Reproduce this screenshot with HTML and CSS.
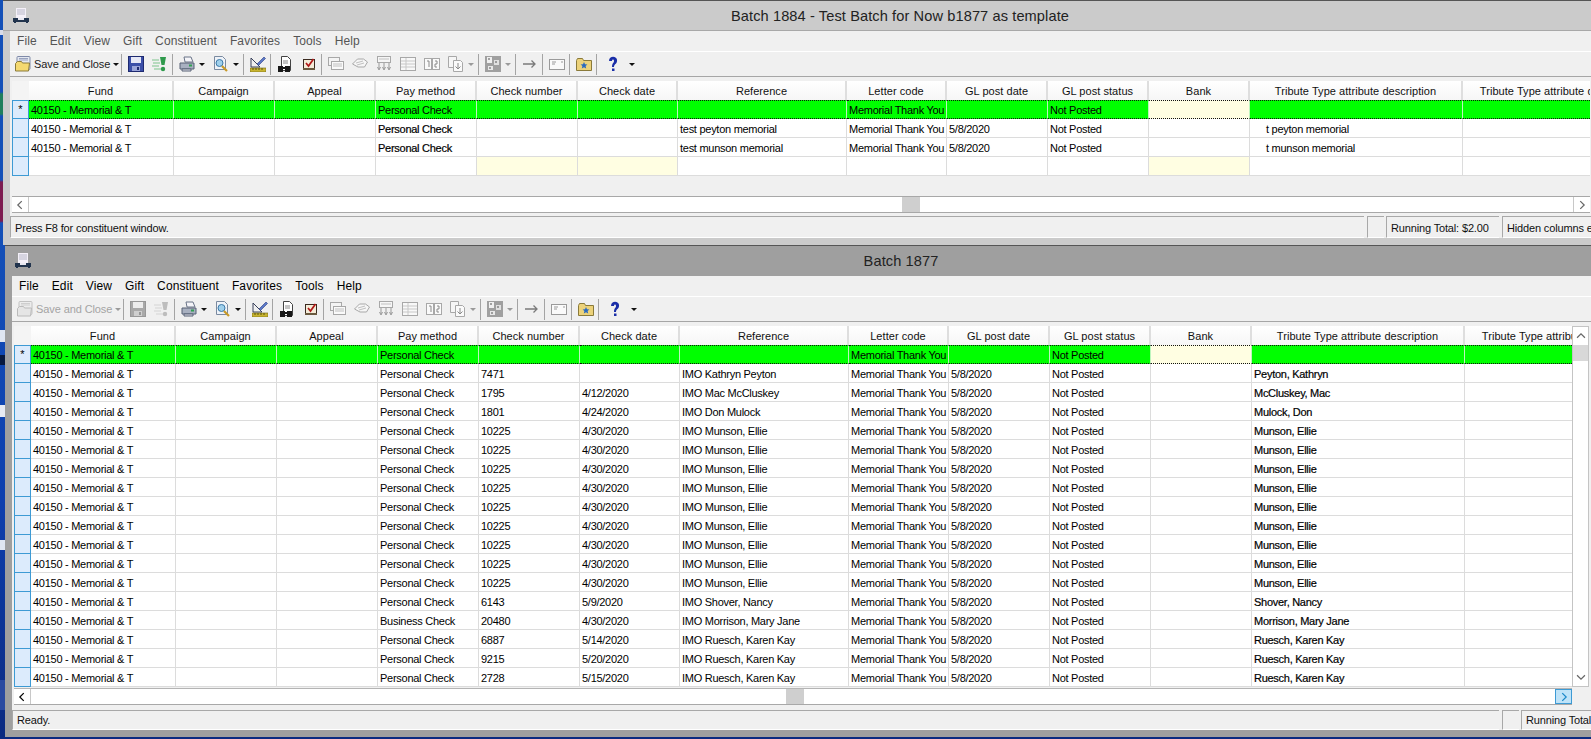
FILE: index.html
```html
<!DOCTYPE html>
<html lang="en">
<head>
<meta charset="utf-8">
<title>Batch 1884</title>
<link rel="stylesheet" href="styles.css">
</head>
<body>
<svg class="defs" width="0" height="0" aria-hidden="true">
  <symbol id="i-inbox" viewBox="0 0 16 16"><rect x="3" y="0" width="10" height="10" fill="#f4f0f8"/><path d="M4 2h8M4 4h8M4 6h8" stroke="#b8b8c8"/><rect x="0" y="10" width="16" height="4" fill="#22344e"/><rect x="5" y="10" width="6" height="2" fill="#e8e8f0"/><rect x="1" y="14" width="2" height="1" fill="#22344e"/><rect x="13" y="14" width="2" height="1" fill="#22344e"/></symbol>
  <symbol id="i-saveclose" viewBox="0 0 16 16"><rect x="2" y="0.500" width="13" height="13" rx="1" fill="#e4e8f0" stroke="#7f8aa8"/><path d="M4 4h9M4 2.500h9" stroke="#9aa4c0"/><path d="M0.500 7.500l2-2h4l1 1.500h7l-1 8h-13z" fill="#f4d970" stroke="#8a7a3a"/></symbol>
  <symbol id="i-floppy" viewBox="0 0 16 16"><rect x="0.500" y="0.500" width="15" height="15" fill="#3b4fa8" stroke="#1e2a70"/><rect x="3" y="1" width="10" height="6" fill="#e6e8f6"/><rect x="4" y="10" width="8" height="5" fill="#9aa4d8"/><rect x="9" y="11" width="2" height="3" fill="#1e2a70"/></symbol>
  <symbol id="i-flag" viewBox="0 0 16 16"><path d="M0 4h7M1 7h7M0 10h7M2 13h7" stroke="#7cc48c"/><path d="M8 1h6l-1.500 8h-3z" fill="#2f9a4c"/><circle cx="11" cy="13" r="2.200" fill="#2f9a4c"/></symbol>
  <symbol id="i-print" viewBox="0 0 16 16"><path d="M5 1h7l2 5H6z" fill="#f4f4f8" stroke="#6a7488"/><path d="M1 7h14v6H1z" fill="#a8b0c0" stroke="#566074"/><path d="M3 13h9v2H3z" fill="#e4e4ec" stroke="#566074"/><rect x="10" y="8.500" width="3" height="2" fill="#2fa050"/></symbol>
  <symbol id="i-preview" viewBox="0 0 16 16"><path d="M1.500 0.500h8l3 3v10h-11z" fill="#eef2f8" stroke="#7a8aa0"/><circle cx="6.500" cy="7" r="3.500" fill="#9fd0ec" stroke="#3a78a8"/><path d="M9 10l5 5" stroke="#c89a28" stroke-width="2.200"/></symbol>
  <symbol id="i-ruler" viewBox="0 0 16 16"><path d="M1 2v9h9z" fill="none" stroke="#38405a"/><path d="M7 8l7-7 1.500 1.500-7 7z" fill="#5a78c8" stroke="#2a3a80" stroke-width=".6"/><rect x="0" y="12" width="16" height="4" fill="#c8b430" stroke="#6e6418" stroke-width=".6"/><path d="M3 12v2M6 12v2M9 12v2M12 12v2" stroke="#5a5410"/></symbol>
  <symbol id="i-binoc" viewBox="0 0 16 16"><path d="M4.500 0.500h6l3 3v11h-9z" fill="#fff" stroke="#444"/><path d="M6 5h5M6 7h5" stroke="#888"/><path d="M1 10h5v6H1zM8 10h5v6H8z" fill="#181818"/><rect x="5" y="11" width="4" height="2" fill="#181818"/></symbol>
  <symbol id="i-check" viewBox="0 0 16 16"><rect x="2.500" y="3.500" width="11" height="9" fill="#f4ecd8" stroke="#3a2a20"/><rect x="2" y="12" width="12" height="2" fill="#6a5a40"/><path d="M5 7l2.500 3L12.500 3" fill="none" stroke="#b01818" stroke-width="1.700"/></symbol>
  <symbol id="i-card" viewBox="0 0 16 16"><rect x="0.500" y="1.500" width="11" height="8" fill="#f4f4f4" stroke="#a8a8a8"/><rect x="3.500" y="5.500" width="12" height="8" fill="#fafafa" stroke="#a8a8a8"/><path d="M5 8h9M5 10h9" stroke="#c0c0c0"/></symbol>
  <symbol id="i-tag" viewBox="0 0 16 16"><path d="M0.500 8l5-5h6l4 3-3 5H6z" fill="#f6f6f6" stroke="#a8a8a8"/><path d="M4 7l7-2M5 9l7-2" stroke="#c0c0c0"/></symbol>
  <symbol id="i-fork" viewBox="0 0 16 16"><rect x="1.500" y="0.500" width="13" height="6" fill="#f6f6f6" stroke="#a8a8a8"/><path d="M3 3h10" stroke="#c0c0c0"/><path d="M3 7v6M8 7v6M13 7v6M1.500 11l1.500 3 1.500-3M6.500 11l1.500 3 1.500-3M11.500 11l1.500 3 1.500-3" fill="none" stroke="#9a9a9a"/></symbol>
  <symbol id="i-table" viewBox="0 0 16 16"><rect x="0.500" y="1.500" width="15" height="13" fill="#f8f8f8" stroke="#a8a8a8"/><path d="M1 5h14M1 8h14M1 11h14M6 2v12" stroke="#c8c8c8"/></symbol>
  <symbol id="i-split" viewBox="0 0 16 16"><rect x="0.500" y="2.500" width="7" height="11" fill="#fafafa" stroke="#a8a8a8"/><rect x="8.500" y="2.500" width="7" height="11" fill="#fafafa" stroke="#a8a8a8"/><path d="M3 5h2v6M11 5h2v3h-2v3h2" fill="none" stroke="#8a8a8a"/></symbol>
  <symbol id="i-copy" viewBox="0 0 16 16"><path d="M0.500 0.500h8v11h-8z" fill="#f6f6f6" stroke="#a8a8a8"/><path d="M5.500 4.500h7l2 2v9h-9z" fill="#fafafa" stroke="#a8a8a8"/><path d="M10 7v6M7.500 10.500l2.500 2.500 2.500-2.500" fill="none" stroke="#8a8a8a"/></symbol>
  <symbol id="i-dice" viewBox="0 0 16 16"><rect x="0" y="0" width="16" height="16" fill="#a0a0a0"/><rect x="2" y="1" width="5" height="6" fill="#f0f0f0"/><rect x="9" y="4" width="5" height="5" fill="#e0e0e0"/><rect x="3" y="10" width="5" height="4" fill="#e8e8e8"/><path d="M3 3h2M10 6h2M4 12h2" stroke="#555"/></symbol>
  <symbol id="i-arrow" viewBox="0 0 16 16"><path d="M1 8h12M9.500 4.500L13 8l-3.500 3.500" fill="none" stroke="#7a7a7a" stroke-width="1.300"/></symbol>
  <symbol id="i-mail" viewBox="0 0 16 16"><rect x="0.500" y="3.500" width="15" height="10" fill="#fafafa" stroke="#9a9a9a"/><path d="M3 6h4M3 8h3M12 6h2" stroke="#9a9a9a"/></symbol>
  <symbol id="i-folder" viewBox="0 0 16 16"><path d="M0.500 4.500l1-2h5l1 2h8v10H0.500z" fill="#ecd27a" stroke="#8a7a3a"/><path d="M8 6l1 2.300 2.400.2-1.800 1.600.6 2.400L8 11.200l-2.200 1.300.6-2.400L4.600 8.500 7 8.300z" fill="#2a6ac0"/></symbol>
  <symbol id="i-help" viewBox="0 0 16 16"><path d="M4 5c0-6 9-5 8 0 0 3-3 3-3 6H7c0-4 2-4 2-6 0-2-2-2-2 0z" fill="#1a2ea8"/><rect x="7" y="12.500" width="2.500" height="2.500" fill="#1a2ea8"/></symbol>
  <symbol id="i-left" viewBox="0 0 16 16"><path d="M10 3.500L5.500 8l4.500 4.500" fill="none" stroke="currentColor" stroke-width="1.400"/></symbol>
  <symbol id="i-right" viewBox="0 0 16 16"><path d="M6 3.500L10.500 8 6 12.500" fill="none" stroke="currentColor" stroke-width="1.400"/></symbol>
  <symbol id="i-up" viewBox="0 0 16 16"><path d="M3.500 10L8 5.500l4.500 4.500" fill="none" stroke="currentColor" stroke-width="1.400"/></symbol>
  <symbol id="i-down" viewBox="0 0 16 16"><path d="M3.500 6L8 10.500 12.500 6" fill="none" stroke="currentColor" stroke-width="1.400"/></symbol>
</svg>

<main class="desktop">
  <span class="bit bit-a"></span><span class="bit bit-b"></span><span class="bit bit-c"></span><span class="bit bit-d"></span><span class="bit bit-e"></span><span class="bit bit-f"></span>

  <section class="window win-a">
    <header class="titlebar">
      <svg class="title-icon"><use href="#i-inbox"/></svg>
      <h1 class="title">Batch 1884 - Test Batch for Now b1877 as template</h1>
    </header>
    <div class="content">
      <nav class="menu"><span>File</span><span>Edit</span><span>View</span><span>Gift</span><span>Constituent</span><span>Favorites</span><span>Tools</span><span>Help</span></nav>
      <div class="toolbar">
        <span class="tool wide"><svg class="ic"><use href="#i-saveclose"/></svg><span class="tool-label">Save and Close</span><i class="caret"></i></span>
        <span class="sep"></span>
        <span class="tool"><svg class="ic"><use href="#i-floppy"/></svg></span>
        <span class="tool"><svg class="ic"><use href="#i-flag"/></svg></span>
        <span class="sep"></span>
        <span class="tool"><svg class="ic"><use href="#i-print"/></svg><i class="caret"></i></span>
        <span class="tool"><svg class="ic"><use href="#i-preview"/></svg><i class="caret"></i></span>
        <span class="sep"></span>
        <span class="tool"><svg class="ic"><use href="#i-ruler"/></svg></span>
        <span class="sep"></span>
        <span class="tool"><svg class="ic"><use href="#i-binoc"/></svg></span>
        <span class="tool"><svg class="ic"><use href="#i-check"/></svg></span>
        <span class="sep"></span>
        <span class="tool"><svg class="ic"><use href="#i-card"/></svg></span>
        <span class="tool"><svg class="ic"><use href="#i-tag"/></svg></span>
        <span class="tool"><svg class="ic"><use href="#i-fork"/></svg></span>
        <span class="tool"><svg class="ic"><use href="#i-table"/></svg></span>
        <span class="tool"><svg class="ic"><use href="#i-split"/></svg></span>
        <span class="tool"><svg class="ic"><use href="#i-copy"/></svg><i class="caret off"></i></span>
        <span class="sep"></span>
        <span class="tool"><svg class="ic"><use href="#i-dice"/></svg><i class="caret off"></i></span>
        <span class="sep"></span>
        <span class="tool"><svg class="ic"><use href="#i-arrow"/></svg></span>
        <span class="sep"></span>
        <span class="tool"><svg class="ic"><use href="#i-mail"/></svg></span>
        <span class="sep"></span>
        <span class="tool"><svg class="ic"><use href="#i-folder"/></svg></span>
        <span class="sep"></span>
        <span class="tool help"><svg class="ic"><use href="#i-help"/></svg><i class="caret"></i></span>
      </div>
      <div class="grid-area">
        <div class="table-box">
          <table class="grid">
            <colgroup><col class="c-rh"><col class="c-fund"><col class="c-std"><col class="c-std"><col class="c-std"><col class="c-std"><col class="c-date"><col class="c-ref"><col class="c-letter"><col class="c-std"><col class="c-std"><col class="c-std"><col class="c-trib"><col class="c-last"></colgroup>
            <thead><tr><th class="corner"></th><th>Fund</th><th>Campaign</th><th>Appeal</th><th>Pay method</th><th>Check number</th><th>Check date</th><th>Reference</th><th>Letter code</th><th>GL post date</th><th>GL post status</th><th>Bank</th><th>Tribute Type attribute description</th><th>Tribute Type attribute description</th></tr></thead>
            <tbody>
              <tr class="active"><th class="rh">*</th><td>40150 - Memorial &amp; T</td><td></td><td></td><td>Personal Check</td><td></td><td></td><td></td><td>Memorial Thank You</td><td></td><td>Not Posted</td><td class="req"></td><td></td><td></td></tr>
              <tr><th class="rh"></th><td>40150 - Memorial &amp; T</td><td></td><td></td><td class="dark">Personal Check</td><td></td><td></td><td>test peyton memorial</td><td>Memorial Thank You</td><td>5/8/2020</td><td>Not Posted</td><td></td><td class="indent">t peyton memorial</td><td></td></tr>
              <tr><th class="rh"></th><td>40150 - Memorial &amp; T</td><td></td><td></td><td class="dark">Personal Check</td><td></td><td></td><td>test munson memorial</td><td>Memorial Thank You</td><td>5/8/2020</td><td>Not Posted</td><td></td><td class="indent">t munson memorial</td><td></td></tr>
              <tr><th class="rh"></th><td></td><td></td><td></td><td></td><td class="req"></td><td class="req"></td><td></td><td></td><td></td><td></td><td class="req"></td><td></td><td></td></tr>
            </tbody>
          </table>
        </div>
      </div>
      <div class="hscroll">
        <span class="sb-btn"><svg class="chev"><use href="#i-left"/></svg></span>
        <span class="sb-track"><span class="sb-thumb"></span></span>
        <span class="sb-btn end"><svg class="chev"><use href="#i-right"/></svg></span>
      </div>
      <footer class="status">
        <span class="panel main-panel">Press F8 for constituent window.</span>
        <span class="panel small-panel"></span>
        <span class="panel total-panel">Running Total: $2.00</span>
        <span class="panel hidden-panel">Hidden columns exist</span>
      </footer>
    </div>
  </section>

  <section class="window win-b">
    <header class="titlebar">
      <svg class="title-icon"><use href="#i-inbox"/></svg>
      <h1 class="title">Batch 1877</h1>
    </header>
    <div class="content">
      <nav class="menu"><span>File</span><span>Edit</span><span>View</span><span>Gift</span><span>Constituent</span><span>Favorites</span><span>Tools</span><span>Help</span></nav>
      <div class="toolbar">
        <span class="tool wide dim"><svg class="ic"><use href="#i-saveclose"/></svg><span class="tool-label">Save and Close</span><i class="caret off"></i></span>
        <span class="sep"></span>
        <span class="tool dim"><svg class="ic"><use href="#i-floppy"/></svg></span>
        <span class="tool dim"><svg class="ic"><use href="#i-flag"/></svg></span>
        <span class="sep"></span>
        <span class="tool"><svg class="ic"><use href="#i-print"/></svg><i class="caret"></i></span>
        <span class="tool"><svg class="ic"><use href="#i-preview"/></svg><i class="caret"></i></span>
        <span class="sep"></span>
        <span class="tool"><svg class="ic"><use href="#i-ruler"/></svg></span>
        <span class="sep"></span>
        <span class="tool"><svg class="ic"><use href="#i-binoc"/></svg></span>
        <span class="tool"><svg class="ic"><use href="#i-check"/></svg></span>
        <span class="sep"></span>
        <span class="tool"><svg class="ic"><use href="#i-card"/></svg></span>
        <span class="tool"><svg class="ic"><use href="#i-tag"/></svg></span>
        <span class="tool"><svg class="ic"><use href="#i-fork"/></svg></span>
        <span class="tool"><svg class="ic"><use href="#i-table"/></svg></span>
        <span class="tool"><svg class="ic"><use href="#i-split"/></svg></span>
        <span class="tool"><svg class="ic"><use href="#i-copy"/></svg><i class="caret off"></i></span>
        <span class="sep"></span>
        <span class="tool"><svg class="ic"><use href="#i-dice"/></svg><i class="caret off"></i></span>
        <span class="sep"></span>
        <span class="tool"><svg class="ic"><use href="#i-arrow"/></svg></span>
        <span class="sep"></span>
        <span class="tool"><svg class="ic"><use href="#i-mail"/></svg></span>
        <span class="sep"></span>
        <span class="tool"><svg class="ic"><use href="#i-folder"/></svg></span>
        <span class="sep"></span>
        <span class="tool help"><svg class="ic"><use href="#i-help"/></svg><i class="caret"></i></span>
      </div>
      <div class="grid-area">
        <div class="table-box">
          <table class="grid">
            <colgroup><col class="c-rh"><col class="c-fund"><col class="c-std"><col class="c-std"><col class="c-std"><col class="c-std"><col class="c-date"><col class="c-ref"><col class="c-letter"><col class="c-std"><col class="c-std"><col class="c-std"><col class="c-trib"><col class="c-last"></colgroup>
            <thead><tr><th class="corner"></th><th>Fund</th><th>Campaign</th><th>Appeal</th><th>Pay method</th><th>Check number</th><th>Check date</th><th>Reference</th><th>Letter code</th><th>GL post date</th><th>GL post status</th><th>Bank</th><th>Tribute Type attribute description</th><th>Tribute Type attribute description</th></tr></thead>
            <tbody>
              <tr class="active"><th class="rh">*</th><td>40150 - Memorial &amp; T</td><td></td><td></td><td>Personal Check</td><td></td><td></td><td></td><td>Memorial Thank You</td><td></td><td>Not Posted</td><td class="req"></td><td></td><td></td></tr>
              <tr><th class="rh"></th><td>40150 - Memorial &amp; T</td><td></td><td></td><td>Personal Check</td><td>7471</td><td></td><td>IMO Kathryn Peyton</td><td>Memorial Thank You</td><td>5/8/2020</td><td>Not Posted</td><td></td><td class="dark">Peyton, Kathryn</td><td></td></tr>
              <tr><th class="rh"></th><td>40150 - Memorial &amp; T</td><td></td><td></td><td>Personal Check</td><td>1795</td><td>4/12/2020</td><td>IMO Mac McCluskey</td><td>Memorial Thank You</td><td>5/8/2020</td><td>Not Posted</td><td></td><td class="dark">McCluskey, Mac</td><td></td></tr>
              <tr><th class="rh"></th><td>40150 - Memorial &amp; T</td><td></td><td></td><td>Personal Check</td><td>1801</td><td>4/24/2020</td><td>IMO Don Mulock</td><td>Memorial Thank You</td><td>5/8/2020</td><td>Not Posted</td><td></td><td class="dark">Mulock, Don</td><td></td></tr>
              <tr><th class="rh"></th><td>40150 - Memorial &amp; T</td><td></td><td></td><td>Personal Check</td><td>10225</td><td>4/30/2020</td><td>IMO Munson, Ellie</td><td>Memorial Thank You</td><td>5/8/2020</td><td>Not Posted</td><td></td><td class="dark">Munson, Ellie</td><td></td></tr>
              <tr><th class="rh"></th><td>40150 - Memorial &amp; T</td><td></td><td></td><td>Personal Check</td><td>10225</td><td>4/30/2020</td><td>IMO Munson, Ellie</td><td>Memorial Thank You</td><td>5/8/2020</td><td>Not Posted</td><td></td><td class="dark">Munson, Ellie</td><td></td></tr>
              <tr><th class="rh"></th><td>40150 - Memorial &amp; T</td><td></td><td></td><td>Personal Check</td><td>10225</td><td>4/30/2020</td><td>IMO Munson, Ellie</td><td>Memorial Thank You</td><td>5/8/2020</td><td>Not Posted</td><td></td><td class="dark">Munson, Ellie</td><td></td></tr>
              <tr><th class="rh"></th><td>40150 - Memorial &amp; T</td><td></td><td></td><td>Personal Check</td><td>10225</td><td>4/30/2020</td><td>IMO Munson, Ellie</td><td>Memorial Thank You</td><td>5/8/2020</td><td>Not Posted</td><td></td><td class="dark">Munson, Ellie</td><td></td></tr>
              <tr><th class="rh"></th><td>40150 - Memorial &amp; T</td><td></td><td></td><td>Personal Check</td><td>10225</td><td>4/30/2020</td><td>IMO Munson, Ellie</td><td>Memorial Thank You</td><td>5/8/2020</td><td>Not Posted</td><td></td><td class="dark">Munson, Ellie</td><td></td></tr>
              <tr><th class="rh"></th><td>40150 - Memorial &amp; T</td><td></td><td></td><td>Personal Check</td><td>10225</td><td>4/30/2020</td><td>IMO Munson, Ellie</td><td>Memorial Thank You</td><td>5/8/2020</td><td>Not Posted</td><td></td><td class="dark">Munson, Ellie</td><td></td></tr>
              <tr><th class="rh"></th><td>40150 - Memorial &amp; T</td><td></td><td></td><td>Personal Check</td><td>10225</td><td>4/30/2020</td><td>IMO Munson, Ellie</td><td>Memorial Thank You</td><td>5/8/2020</td><td>Not Posted</td><td></td><td class="dark">Munson, Ellie</td><td></td></tr>
              <tr><th class="rh"></th><td>40150 - Memorial &amp; T</td><td></td><td></td><td>Personal Check</td><td>10225</td><td>4/30/2020</td><td>IMO Munson, Ellie</td><td>Memorial Thank You</td><td>5/8/2020</td><td>Not Posted</td><td></td><td class="dark">Munson, Ellie</td><td></td></tr>
              <tr><th class="rh"></th><td>40150 - Memorial &amp; T</td><td></td><td></td><td>Personal Check</td><td>10225</td><td>4/30/2020</td><td>IMO Munson, Ellie</td><td>Memorial Thank You</td><td>5/8/2020</td><td>Not Posted</td><td></td><td class="dark">Munson, Ellie</td><td></td></tr>
              <tr><th class="rh"></th><td>40150 - Memorial &amp; T</td><td></td><td></td><td>Personal Check</td><td>6143</td><td>5/9/2020</td><td>IMO Shover, Nancy</td><td>Memorial Thank You</td><td>5/8/2020</td><td>Not Posted</td><td></td><td class="dark">Shover, Nancy</td><td></td></tr>
              <tr><th class="rh"></th><td>40150 - Memorial &amp; T</td><td></td><td></td><td>Business Check</td><td>20480</td><td>4/30/2020</td><td>IMO Morrison, Mary Jane</td><td>Memorial Thank You</td><td>5/8/2020</td><td>Not Posted</td><td></td><td class="dark">Morrison, Mary Jane</td><td></td></tr>
              <tr><th class="rh"></th><td>40150 - Memorial &amp; T</td><td></td><td></td><td>Personal Check</td><td>6887</td><td>5/14/2020</td><td>IMO Ruesch, Karen Kay</td><td>Memorial Thank You</td><td>5/8/2020</td><td>Not Posted</td><td></td><td class="dark">Ruesch, Karen Kay</td><td></td></tr>
              <tr><th class="rh"></th><td>40150 - Memorial &amp; T</td><td></td><td></td><td>Personal Check</td><td>9215</td><td>5/20/2020</td><td>IMO Ruesch, Karen Kay</td><td>Memorial Thank You</td><td>5/8/2020</td><td>Not Posted</td><td></td><td class="dark">Ruesch, Karen Kay</td><td></td></tr>
              <tr><th class="rh"></th><td>40150 - Memorial &amp; T</td><td></td><td></td><td>Personal Check</td><td>2728</td><td>5/15/2020</td><td>IMO Ruesch, Karen Kay</td><td>Memorial Thank You</td><td>5/8/2020</td><td>Not Posted</td><td></td><td class="dark">Ruesch, Karen Kay</td><td></td></tr>
            </tbody>
          </table>
        </div>
        <div class="vscroll">
          <span class="vs-btn"><svg class="chev"><use href="#i-up"/></svg></span>
          <span class="vs-thumb"></span>
          <span class="vs-track"></span>
          <span class="vs-btn"><svg class="chev"><use href="#i-down"/></svg></span>
        </div>
      </div>
      <div class="hscroll">
        <span class="sb-btn dark-chev"><svg class="chev"><use href="#i-left"/></svg></span>
        <span class="sb-track"><span class="sb-thumb"></span></span>
        <span class="sb-btn end hot"><svg class="chev"><use href="#i-right"/></svg></span>
      </div>
      <footer class="status">
        <span class="panel main-panel">Ready.</span>
        <span class="panel small-panel"></span>
        <span class="panel total-panel">Running Total: $2.00</span>
      </footer>
    </div>
  </section>
</main>
</body>
</html>
```

FILE: styles.css
```css
* { box-sizing: border-box; }

html, body {
  margin: 0;
  height: 100%;
  overflow: hidden;
}

body {
  font-family: "Liberation Sans", Arial, sans-serif;
  font-size: 11px;
  color: #000;
}

.defs { position: absolute; }

.desktop {
  position: relative;
  width: 1591px;
  height: 739px;
  overflow: hidden;
  background: linear-gradient(#1450b8 0, #1450b8 92px, #1f7f5c 94px, #1f7f5c 114px, #1450b8 116px, #1450b8 180px, #7d1c50 182px, #7d1c50 221px, #1450b8 223px, #0d3fae 500px, #0b2a80 100%);
}

.bit { position: absolute; left: 0; }
.bit-a { top: 30px; width: 3px; height: 5px; background: #d8dce8; }
.bit-b { top: 330px; width: 5px; height: 12px; background: #dfe6f2; }
.bit-c { top: 355px; width: 5px; height: 10px; background: #081a40; }
.bit-d { top: 405px; width: 5px; height: 12px; background: #e6eaf4; }
.bit-e { top: 540px; width: 5px; height: 10px; background: #dfe6f2; }
.bit-f { top: 680px; width: 5px; height: 30px; background: #2a4aa0; }

.window {
  position: absolute;
  display: flex;
  flex-direction: column;
  overflow: hidden;
  padding: 0 0 7px 7px;
  border-top: 1px solid #555;
}

.win-a { left: 3px; top: 0; width: 1588px; height: 245px; background: #cbcbcb; }
.win-b { left: 5px; top: 245px; width: 1586px; height: 492px; background: #9f9f9f; }

.titlebar {
  flex: none;
  display: flex;
  align-items: center;
  height: 30px;
  margin-left: -7px;
  padding-left: 10px;
}

.win-a .titlebar { border-bottom: 1px solid #a8a8a8; }

.title-icon { flex: none; width: 16px; height: 16px; }

.title {
  flex: 1;
  margin: 0;
  padding-left: 180px;
  text-align: center;
  font-size: 14.600px;
  font-weight: 400;
  letter-spacing: .1px;
  color: #222;
}

.content {
  flex: 1;
  min-height: 0;
  display: flex;
  flex-direction: column;
  background: #f0f0f0;
}

.menu {
  flex: none;
  display: flex;
  height: 21px;
  padding: 0 0 1px .5px;
  align-items: center;
  border-bottom: 1px solid #fff;
  font-size: 12px;
  letter-spacing: .1px;
}

.menu span { padding: 0 6.500px; }
.win-a .menu { color: #555; }

.toolbar {
  flex: none;
  display: flex;
  align-items: center;
  height: 25px;
  padding-left: 1px;
  border-bottom: 1px solid #a6a6a6;
}

.tool {
  flex: none;
  display: flex;
  align-items: center;
  margin: 0 4px;
}

.tool.wide { margin-right: 2px; }

.ic { flex: none; width: 16px; height: 16px; }

.tool-label {
  margin-left: 3px;
  font-size: 11px;
  letter-spacing: -.1px;
  color: #222;
}

.caret {
  width: 0;
  height: 0;
  margin-left: 4px;
  border: 3px solid transparent;
  border-top: 3px solid #111;
  border-bottom: 0;
}

.caret.off { border-top-color: #9a9a9a; }
.help .ic { margin-left: 2px; margin-right: 4px; }

.wide .caret { margin-left: 3px; }

.sep {
  flex: none;
  width: 1px;
  height: 21px;
  margin: 0 2px 0 0;
  background: #a4a4a4;
}

.dim .ic { filter: grayscale(1) opacity(.45); }
.dim .tool-label { color: #a4a4a4; }

.grid-area {
  flex: 1;
  min-height: 0;
  display: flex;
  padding: 4px 1px 0 2px;
}

.win-b .grid-area { padding-right: 2px; }

.table-box {
  flex: 1;
  min-width: 0;
  overflow: hidden;
}

.grid {
  table-layout: fixed;
  border-collapse: separate;
  border-spacing: 0;
  width: 1648px;
}

.c-rh { width: 17px; }
.c-fund { width: 145px; }
.c-std { width: 101px; }
.c-date { width: 100px; }
.c-ref { width: 169px; }
.c-letter { width: 100px; }
.c-trib { width: 213px; }
.c-last { width: 197px; }

.grid th, .grid td {
  height: 19px;
  padding: 0;
  overflow: hidden;
  white-space: nowrap;
  font-size: 11px;
  line-height: 16px;
}

.grid thead th {
  padding-top: 1px;
  font-weight: 400;
  text-align: center;
  letter-spacing: .05px;
  background: linear-gradient(#fff, #f6f6f6);
  border-right: 2px solid #dedede;
  color: #111;
}

.grid thead .corner { background: #f4f4f4; border-right: 0; }

.grid td {
  padding: 1px 0 0 2px;
  letter-spacing: -.27px;
  background: #fff;
  border-right: 1px solid #dcdcdc;
  border-bottom: 1px solid #dcdcdc;
  color: #000;
}

.grid .rh {
  background: #dcebfc;
  border: 1px solid #3d9ad4;
  border-top: 0;
  font-weight: 400;
  text-align: center;
  font-size: 11px;
  line-height: 15px;
}

.grid tbody tr:first-child .rh { border-top: 1px solid #3d9ad4; }

.grid .active td {
  padding-top: 0;
  background: #00ff00;
  border-top: 1px dotted #111;
  border-bottom: 1px dotted #111;
  border-right: 1px solid #bdf5bd;
}

.grid .active td.req { background: #fffee2; }
.grid td.req { background: #fffee2; }
.grid td.indent { padding-left: 16px; }
.grid td.dark { color: #000; -webkit-text-stroke: .2px #000; }

.hscroll {
  flex: none;
  display: flex;
  height: 17px;
  margin: 0 1px 0 2px;
  background: #fff;
  border-top: 1px solid #a8a8a8;
  border-bottom: 1px solid #a8a8a8;
}

.win-b .hscroll { margin-right: 19px; margin-top: 1px; border-top-color: #b4b4b4; }

.sb-btn {
  flex: none;
  display: flex;
  align-items: center;
  justify-content: center;
  width: 17px;
  border-right: 1px solid #c8c8c8;
  color: #666;
}

.sb-btn.end { border-right: 0; border-left: 1px solid #c8c8c8; }
.dark-chev { color: #000; }

.sb-btn.hot {
  background: #bfe3f8;
  border: 1px solid #3d9ad4;
  color: #1a88c8;
}

.chev { width: 14px; height: 14px; }

.sb-track { flex: 1; }

.sb-thumb {
  display: block;
  width: 18px;
  height: 100%;
  background: #cfcfcf;
}

.win-a .sb-thumb { margin-left: 873px; }
.win-b .sb-thumb { margin-left: 755px; }

.vscroll {
  flex: none;
  display: flex;
  flex-direction: column;
  width: 17px;
  background: #fff;
  border: 1px solid #c4c4c4;
  color: #666;
}

.vs-btn {
  flex: none;
  display: flex;
  align-items: center;
  justify-content: center;
  height: 18px;
}

.vs-thumb { flex: none; height: 16px; background: #d8d8d8; }
.vs-track { flex: 1; }

.status {
  flex: none;
  display: flex;
  gap: 3px;
  height: 22px;
  margin-top: 3px;
  font-size: 11px;
  letter-spacing: -.15px;
  color: #111;
  white-space: nowrap;
}

.win-a .panel { padding-top: 1px; }

.win-b .status { height: 20px; margin-top: 5px; }

.panel {
  flex: none;
  display: flex;
  align-items: center;
  padding-left: 4px;
  border-top: 1px solid #a8a8a8;
  border-left: 1px solid #a8a8a8;
  border-bottom: 1px solid #fff;
}

.win-a .main-panel { width: 1354px; }
.win-b .main-panel { width: 1487px; }
.small-panel { width: 17px; }
.total-panel { width: 113px; }
.win-b .total-panel { margin-left: -1px; width: 90px; }
.win-a .total-panel { margin-left: -1px; }
.hidden-panel { width: 200px; }
```
